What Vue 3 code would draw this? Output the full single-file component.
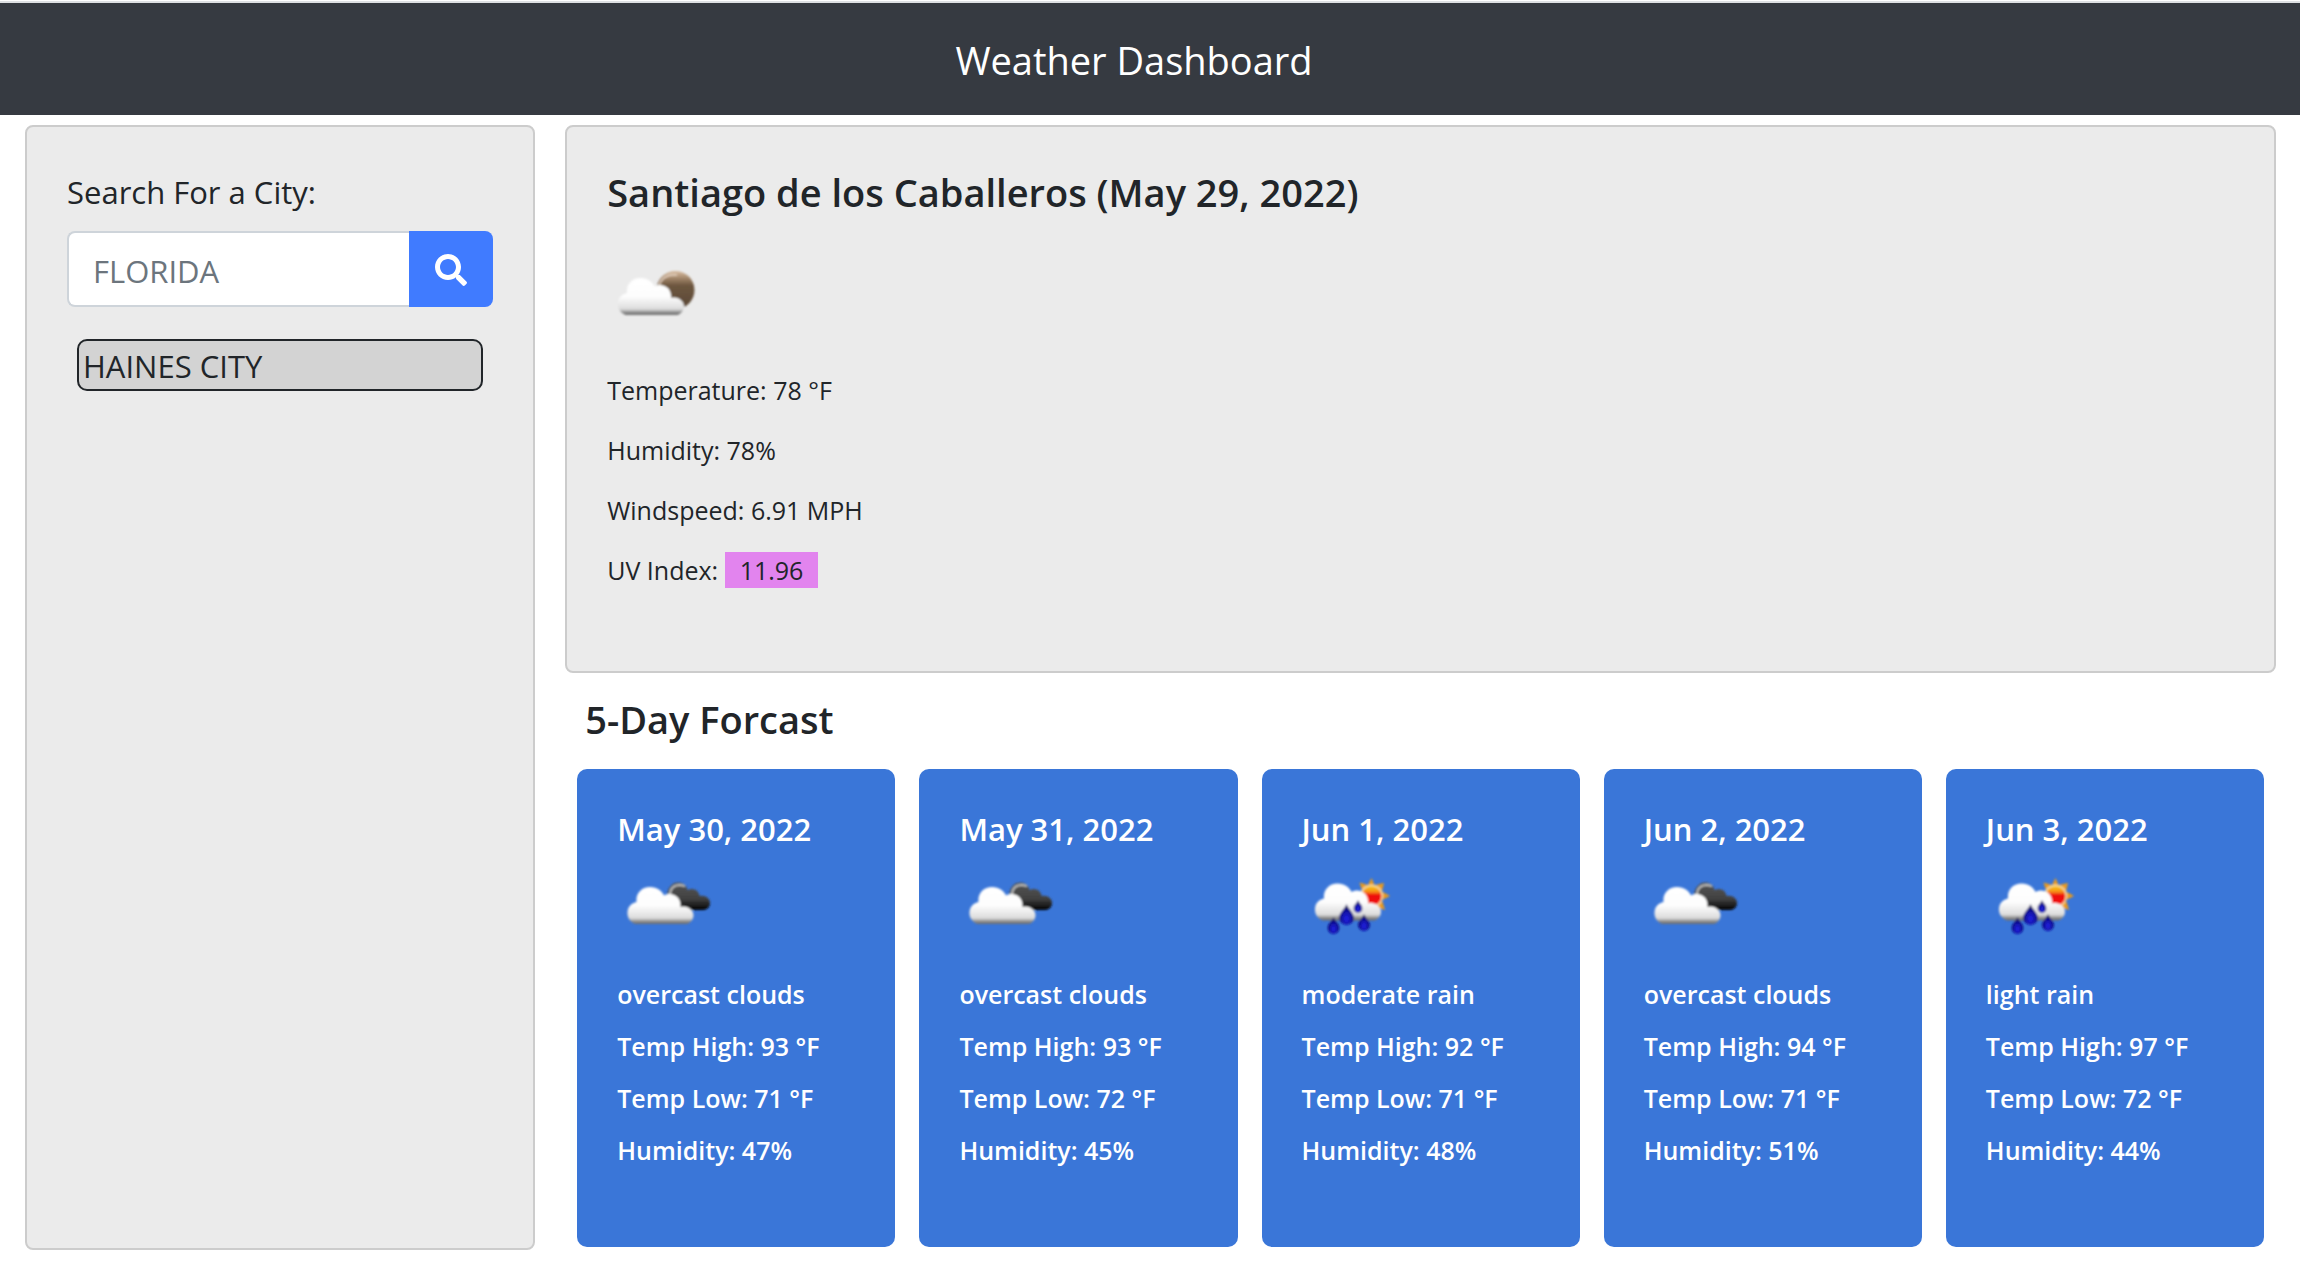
<script setup>
import { ref } from 'vue'

const query = ref('')
const history = ref(['HAINES CITY'])

const current = {
  city: 'Santiago de los Caballeros',
  date: 'May 29, 2022',
  temperature: 78,
  humidity: 78,
  wind: 6.91,
  uv: 11.96,
}

const forecast = [
  { date: 'May 30, 2022', icon: 'overcast', text: 'overcast clouds', high: 93, low: 71, humidity: 47 },
  { date: 'May 31, 2022', icon: 'overcast', text: 'overcast clouds', high: 93, low: 72, humidity: 45 },
  { date: 'Jun 1, 2022', icon: 'rain', text: 'moderate rain', high: 92, low: 71, humidity: 48 },
  { date: 'Jun 2, 2022', icon: 'overcast', text: 'overcast clouds', high: 94, low: 71, humidity: 51 },
  { date: 'Jun 3, 2022', icon: 'rain', text: 'light rain', high: 97, low: 72, humidity: 44 },
]
</script>

<template>
  <div class="page">
    <!-- Shared weather symbols -->
    <svg class="sprite" width="0" height="0" aria-hidden="true">
      <defs>
        <linearGradient id="cloud-fill" x1="0" y1="0" x2="0" y2="1">
          <stop offset="0" stop-color="#fff" />
          <stop offset="0.5" stop-color="#fdfdfd" />
          <stop offset="0.84" stop-color="#dcdcdc" />
          <stop offset="0.93" stop-color="#8c8c8c" />
          <stop offset="1" stop-color="#6a6a6a" />
        </linearGradient>
        <linearGradient id="dark-fill" x1="0" y1="0" x2="0" y2="1">
          <stop offset="0" stop-color="#565656" />
          <stop offset="0.6" stop-color="#404040" />
          <stop offset="1" stop-color="#000" />
        </linearGradient>
        <linearGradient id="moon-fill" x1="0" y1="0" x2="0" y2="1">
          <stop offset="0" stop-color="#d9bda2" />
          <stop offset="0.2" stop-color="#a08468" />
          <stop offset="0.38" stop-color="#6d563f" />
          <stop offset="1" stop-color="#5a4836" />
        </linearGradient>
        <linearGradient id="sun-fill" x1="0" y1="0" x2="0" y2="1">
          <stop offset="0.05" stop-color="#f7c21a" />
          <stop offset="0.3" stop-color="#f58a14" />
          <stop offset="0.45" stop-color="#ee1010" />
          <stop offset="1" stop-color="#f00c0c" />
        </linearGradient>
        <radialGradient id="drop-fill" cx="0.5" cy="0.7" r="0.55">
          <stop offset="0" stop-color="#2323e6" />
          <stop offset="0.6" stop-color="#1010a4" />
          <stop offset="1" stop-color="#06065e" />
        </radialGradient>
        <filter id="soft" x="-10%" y="-10%" width="120%" height="120%">
          <feGaussianBlur stdDeviation="0.8" />
        </filter>
      </defs>
      <symbol id="cloud" viewBox="0 0 100 100">
        <path d="M18 70C13 68 10 63 10.500 58C11 52 15 49 19.500 48C18.500 39 25 33 33 33C40 33 45 37 47 41.500C50 39.500 54 39.500 57 41C62 43 64 48 63.500 53C70 51 76.500 56 76.500 61C76.500 66 73 69 70 70Z" fill="url(#cloud-fill)" />
      </symbol>
      <symbol id="drop" viewBox="0 0 14 20">
        <path d="M7 0C8 4 14 8 14 13A7 7 0 0 1 0 13C0 8 6 4 7 0Z" fill="url(#drop-fill)" />
      </symbol>
      <symbol id="overcast" viewBox="0 0 100 100">
        <g filter="url(#soft)">
          <path d="M50 46C49 36 54 28.500 61 28.500C66 28.500 69.500 31 70.500 36C77 33 82 37 82.500 42C89 41 93 45 93 49C93 53 90 56 86 56H60Z" fill="url(#dark-fill)" />
          <path d="M53 41C53 33 59 29 68 32" fill="none" stroke="#bdbdbd" stroke-width="2" />
          <use href="#cloud" width="100" height="100" />
        </g>
      </symbol>
      <symbol id="night" viewBox="0 0 100 100">
        <g filter="url(#soft)">
          <circle cx="68.500" cy="47" r="19" fill="url(#moon-fill)" />
          <path d="M52 43C54 35 61 31 70 32" fill="none" stroke="#e6d3c2" stroke-width="1.500" />
          <use href="#cloud" y="2" width="101" height="100" />
        </g>
      </symbol>
      <symbol id="rain" viewBox="0 0 100 100">
        <g filter="url(#soft)">
          <path d="M69.500 24L72.500 31L82 29L80 37.500L88 42L80 46L83 56L74 53H60V36L57.500 28.500L66 31Z" fill="#e99a1c" />
          <circle cx="69.500" cy="42" r="11.500" fill="#f3d9a6" />
          <circle cx="69.500" cy="42" r="10" fill="url(#sun-fill)" />
          <use href="#cloud" x="2.500" y="-3.500" width="100" height="100" />
          <use href="#drop" x="25.500" y="63" width="12" height="17" />
          <use href="#drop" x="37" y="50" width="15" height="21" />
          <use href="#drop" x="51.500" y="46" width="9" height="13" />
          <use href="#drop" x="56" y="60" width="12" height="17" />
        </g>
      </symbol>
    </svg>

    <header class="topbar">
      <h1 class="brand">Weather Dashboard</h1>
    </header>

    <main class="layout">
      <aside class="panel search">
        <label class="search-label" for="city">Search For a City:</label>
        <form class="search-form" @submit.prevent>
          <input id="city" v-model="query" class="search-input" type="text" placeholder="FLORIDA" />
          <button class="search-button" type="submit" aria-label="Search">
            <svg viewBox="0 0 512 512" width="32" height="32" fill="currentColor" aria-hidden="true">
              <path d="M505 442.700L405.300 343c-4.500-4.500-10.600-7-17-7H372c27.600-35.300 44-79.700 44-128C416 93.100 322.900 0 208 0S0 93.100 0 208s93.100 208 208 208c48.300 0 92.700-16.400 128-44v16.300c0 6.400 2.500 12.500 7 17l99.700 99.700c9.400 9.400 24.600 9.400 33.900 0l28.300-28.300c9.400-9.400 9.400-24.600.1-34zM208 336c-70.700 0-128-57.200-128-128 0-70.700 57.200-128 128-128 70.700 0 128 57.200 128 128 0 70.700-57.200 128-128 128z" />
            </svg>
          </button>
        </form>
        <button v-for="city in history" :key="city" class="history" type="button">{{ city }}</button>
      </aside>

      <div class="content">
        <section class="panel current">
          <h2 class="heading">{{ current.city }} ({{ current.date }})</h2>
          <svg class="icon" aria-hidden="true"><use href="#night" /></svg>
          <div class="readings">
            <p>Temperature: {{ current.temperature }} °F</p>
            <p>Humidity: {{ current.humidity }}%</p>
            <p>Windspeed: {{ current.wind }} MPH</p>
            <p>UV Index: <span class="uv">{{ current.uv }}</span></p>
          </div>
        </section>

        <section class="forecast">
          <h2 class="heading forecast-title">5-Day Forcast</h2>
          <div class="days">
            <article v-for="day in forecast" :key="day.date" class="day">
              <h3 class="day-date">{{ day.date }}</h3>
              <svg class="icon" aria-hidden="true"><use :href="'#' + day.icon" /></svg>
              <div class="day-lines">
                <p>{{ day.text }}</p>
                <p>Temp High: {{ day.high }} °F</p>
                <p>Temp Low: {{ day.low }} °F</p>
                <p>Humidity: {{ day.humidity }}%</p>
              </div>
            </article>
          </div>
        </section>
      </div>
    </main>
  </div>
</template>

<style>
body {
  background: #fff;
}
</style>

<style scoped>
.page {
  padding-top: 1px;
  color: #212529;
  font-family: "Segoe UI", "Open Sans", "Noto Sans", sans-serif;
  font-size: 25px;
  line-height: 40px;
}

.sprite {
  position: absolute;
}

h1,
h2,
h3,
p {
  margin: 0;
}

.topbar {
  padding: 32px 32px 30px 0;
  border-top: 2px solid #dee0e3;
  background: #363a41;
  color: #fff;
  text-align: center;
}

.brand {
  font-size: 38px;
  font-weight: 400;
  line-height: 50px;
}

.layout {
  display: grid;
  grid-template-columns: minmax(0, 17fr) minmax(0, 57fr);
  gap: 30px;
  padding: 10px 24px 14px 25px;
}

.panel {
  box-sizing: border-box;
  padding: 40px;
  border: 2px solid #ccc;
  border-radius: 8px;
  background: #ebebeb;
}

.search {
  display: flex;
  flex-direction: column;
}

.search-label {
  margin-bottom: 14px;
  font-size: 31px;
  line-height: 50px;
}

.search-form {
  display: flex;
  height: 76px;
  margin-bottom: 32px;
}

.search-input {
  box-sizing: border-box;
  flex: 1;
  min-width: 0;
  padding: 4px 24px 0;
  border: 2px solid #ced4da;
  border-right: 0;
  border-radius: 8px 0 0 8px;
  background: #fff;
  color: #495057;
  font-family: inherit;
  font-size: 31px;
}

.search-input::placeholder {
  color: #6c757d;
  opacity: 1;
}

.search-button {
  display: flex;
  align-items: center;
  justify-content: center;
  width: 84px;
  padding: 2px 0 0;
  border: 0;
  border-radius: 0 8px 8px 0;
  background: #407bff;
  color: #fff;
}

.history {
  margin: 0 10px;
  padding: 2px 4px 0;
  border: 2px solid #212529;
  border-radius: 10px;
  background: #d3d3d3;
  color: inherit;
  font-family: inherit;
  font-size: 31px;
  line-height: 46px;
  text-align: left;
}

.content {
  min-width: 0;
  padding-bottom: 3px;
}

.current {
  padding-bottom: 81px;
}

.heading {
  font-size: 38px;
  font-weight: 600;
  line-height: 50px;
}

.icon {
  display: block;
  width: 100px;
  height: 100px;
}

.current .icon {
  margin: 26px 0 27px;
}

.readings {
  display: grid;
  gap: 20px;
}

.uv {
  display: inline-block;
  padding: 0 15px;
  background: #e284ee;
  line-height: 36px;
}

.forecast {
  padding: 21px 12px 0;
}

.forecast-title {
  margin: 0 8px 25px;
}

.days {
  display: grid;
  grid-template-columns: repeat(5, minmax(0, 1fr));
  gap: 24px;
}

.day {
  padding: 40px 40px 77px;
  border-radius: 10px;
  background: #3a76d8;
  color: #fff;
  font-weight: 600;
}

.day-date {
  font-size: 31px;
  font-weight: 600;
}

.day .icon {
  margin: 5px 0 20px;
}

.day-lines {
  display: grid;
  gap: 12px;
}
</style>
